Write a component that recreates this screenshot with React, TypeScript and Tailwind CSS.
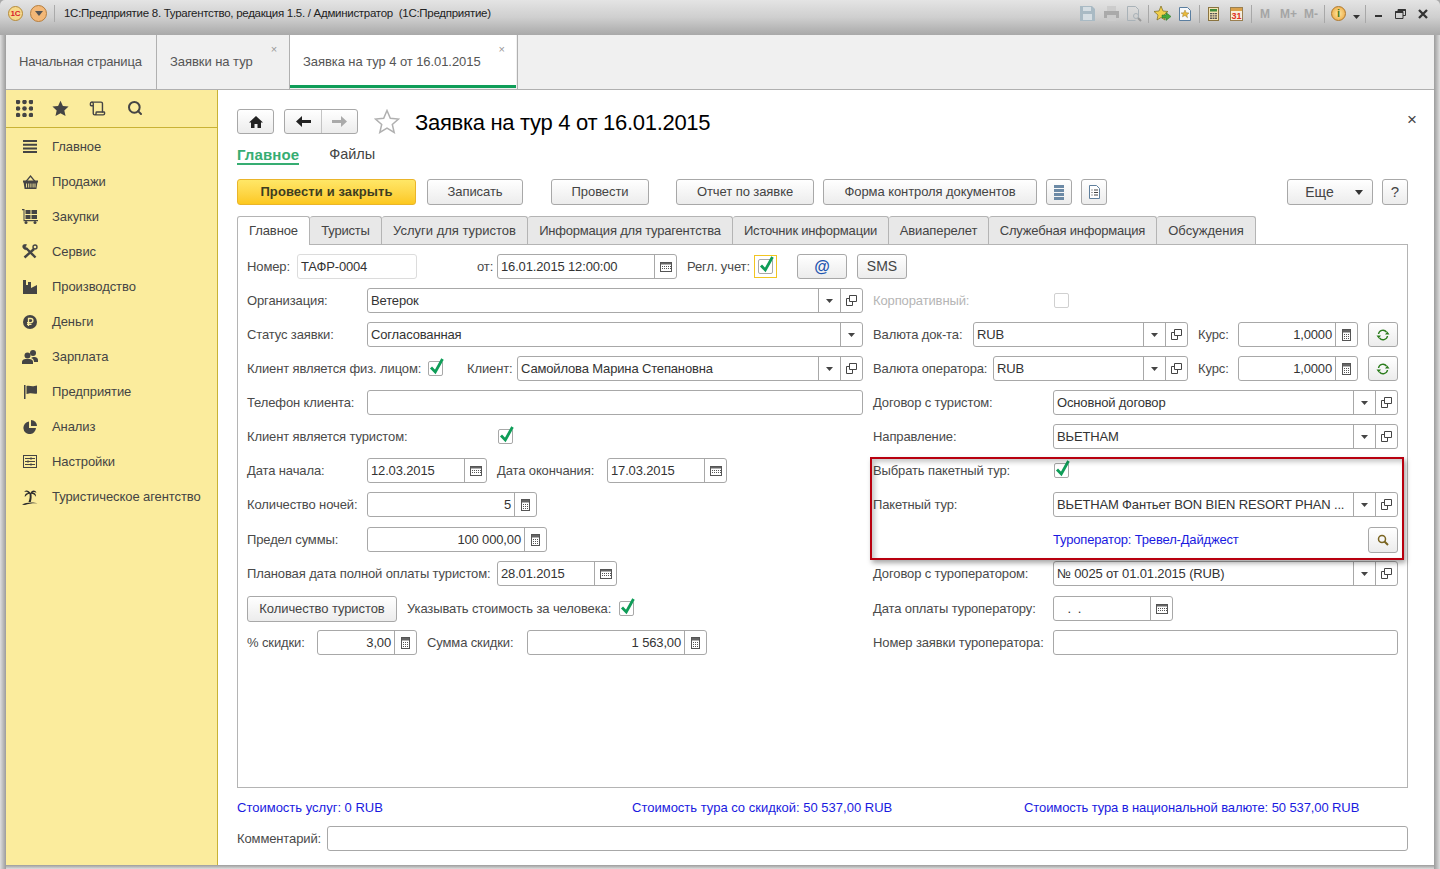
import type { ReactNode } from "react";
import { Search, Scroll } from "lucide-react";

const btn = "flex items-center justify-center rounded-[3px] border border-[#a8a8a8] bg-linear-to-b from-white to-[#ececec] shrink-0";
const btnText = "h-[26px] text-[#444] text-[13px] tracking-[-0.08px] whitespace-nowrap";

function Check() {
  return (
    <span className="relative block w-[15px] h-[15px] rounded-[2px] border border-[#a8a8a8] bg-white shrink-0">
      <svg width="18" height="18" viewBox="0 0 18 18" className="absolute left-[-1px] top-[-5px]">
        <path d="M3 10.500 L7.300 15 L14.500 2" fill="none" stroke="#0f9d58" strokeWidth="2.800" />
      </svg>
    </span>
  );
}

function DropIcon() {
  return <svg width="7" height="4" viewBox="0 0 7 4"><path d="M0 0H7L3.500 4Z" fill="#444" /></svg>;
}

function OpenIcon() {
  return (
    <svg width="11" height="11" viewBox="0 0 11 11" fill="none" stroke="#444">
      <path d="M3.500 .5h7v6h-7z" />
      <path d="M3.500 3.500h-3v7h6v-4" />
    </svg>
  );
}

function CalIcon() {
  return (
    <svg width="12" height="10" viewBox="0 0 12 10">
      <rect x=".5" y=".5" width="11" height="9" fill="#fff" stroke="#555" />
      <rect x="1" y="1" width="10" height="1.500" fill="#666" />
      <path d="M2 4h1v1H2zM4 4h1v1H4zM6 4h1v1H6zM8 4h1v1H8zM2 6h1v1H2zM4 6h1v1H4zM6 6h1v1H6zM8 6h1v1H8zM10 4h1v1h-1zM10 6h1v1h-1z" fill="#555" />
    </svg>
  );
}

function CalcIcon() {
  return (
    <svg width="9" height="12" viewBox="0 0 9 12">
      <rect x=".5" y=".5" width="8" height="11" fill="#fff" stroke="#555" />
      <rect x="1" y="1" width="7" height="2.500" fill="#666" />
      <path d="M2 5h1v1H2zM4 5h1v1H4zM6 5h1v1H6zM2 7h1v1H2zM4 7h1v1H4zM6 7h1v1H6zM2 9h1v1H2zM4 9h1v1H4zM6 9h1v1H6z" fill="#555" />
    </svg>
  );
}

function Refresh() {
  return (
    <svg width="14" height="12" viewBox="0 0 14 12" fill="none" stroke="#2d7d1e" strokeWidth="1.400">
      <path d="M2.500 5a4.500 4.500 0 0 1 8-2" />
      <path d="M11.500 7a4.500 4.500 0 0 1-8 2" />
      <path d="M13.500 5.500H9l2.300-3zM.5 6.500h4.500l-2.300 3z" fill="#2d7d1e" stroke="none" />
    </svg>
  );
}

const segment = "flex items-center justify-center h-full w-[22px] border-l border-[#a8a8a8] shrink-0";

interface FieldProps {
  className: string;
  value?: string;
  right?: boolean;
  light?: boolean;
  dd?: boolean;
  open?: boolean;
  cal?: boolean;
  calc?: boolean;
}

function Field({ className, value, right, light, dd, open, cal, calc }: FieldProps) {
  return (
    <div className={`flex items-center h-[25px] rounded-[3px] border bg-white shrink-0 ${light ? "border-[#dcdcdc]" : "border-[#a8a8a8]"} ${className}`}>
      <span className={`flex-1 min-w-0 px-[3px] text-[13px] tracking-[-0.15px] leading-[23px] text-[#333] whitespace-pre overflow-hidden ${right ? "text-right" : ""}`}>{value}</span>
      {dd && <span className={segment}><DropIcon /></span>}
      {open && <span className={segment}><OpenIcon /></span>}
      {cal && <span className={segment}><CalIcon /></span>}
      {calc && <span className={segment}><CalcIcon /></span>}
    </div>
  );
}

function Label({ className = "", muted, children }: { className?: string; muted?: boolean; children: ReactNode }) {
  return <span className={`shrink-0 whitespace-nowrap text-[13px] tracking-[-0.12px] ${muted ? "text-[#b5b5b5]" : "text-[#4a4a4a]"} ${className}`}>{children}</span>;
}

function Row({ wide, children }: { wide?: boolean; children: ReactNode }) {
  return <div className={`flex items-center h-[25px] ${wide ? "mb-[10px]" : "mb-[9px]"}`}>{children}</div>;
}

const menu: [string, ReactNode][] = [
  ["Главное", <svg width="14" height="13" viewBox="0 0 14 13" fill="#444"><path d="M0 0h14v2H0zM0 3.700h14v2H0zM0 7.400h14v2H0zM0 11h14v2H0z" /></svg>],
  ["Продажи", <svg width="15" height="14" viewBox="0 0 15 14"><path d="M3 6.500l4.500-5.500L12 6.500" fill="none" stroke="#444" strokeWidth="1.200" /><path d="M0 5.500h15v2h-.6l-1 6.500H1.600l-1-6.500H0z" fill="#444" /><path d="M3.500 8.500v4M5.700 8.500v4M7.900 8.500v4M10.100 8.500v4M12 8.500v4" stroke="#fbec9d" strokeWidth=".9" /></svg>],
  ["Закупки", <svg width="16" height="15" viewBox="0 0 16 15" fill="#444"><path d="M0 0h2.500v11H16v1.200H1.500V1.200H0z" /><path d="M3.500 1h5v4h-5zM9.500 1h5.500v4H9.500zM3.500 6h5v4h-5zM9.500 6h5.500v4H9.500z" /><circle cx="4" cy="13.500" r="1.500" /><circle cx="13" cy="13.500" r="1.500" /></svg>],
  ["Сервис", <svg width="16" height="15" viewBox="0 0 16 15" fill="none" stroke="#444"><path d="M4 4l9.500 9.500" strokeWidth="2.400" /><path d="M12 5L2.500 13.500" strokeWidth="2.400" /><path d="M.8 1.500a3.200 3.200 0 0 0 4.700 3.700L3.500 3l1-2.500A3 3 0 0 0 .8 1.500z" fill="#444" strokeWidth=".5" /><circle cx="13" cy="3" r="2" strokeWidth="1.400" /></svg>],
  ["Производство", <svg width="14" height="14" viewBox="0 0 14 14" fill="#444"><path d="M0 14V0h3v5h2V2h3v6l6-3v9z" /></svg>],
  ["Деньги", <svg width="14" height="14" viewBox="0 0 14 14"><circle cx="7" cy="7" r="7" fill="#444" /><path d="M5.500 11V3.500h2.300a2 2 0 0 1 0 4.200H4M4 9.300h4.500" fill="none" stroke="#fbec9d" strokeWidth="1.300" /></svg>],
  ["Зарплата", <svg width="16" height="14" viewBox="0 0 16 14" fill="#444"><circle cx="5.500" cy="5.500" r="3" /><path d="M0 14v-2c0-2.500 2.500-3 5.500-3s5.500.5 5.500 3v2z" /><circle cx="11" cy="3" r="3" /><path d="M11 7c2.500 0 5 .5 5 3v2h-4c0-2-1-3.500-3-4z" /></svg>],
  ["Предприятие", <svg width="13" height="14" viewBox="0 0 13 14" fill="#444"><path d="M0 0h1.500v14H0z" /><path d="M2.500 1c3-1 5 1 8 0l2.500-.5v8c-3 1-5-1-8 0l-2.500.5z" /></svg>],
  ["Анализ", <svg width="14" height="14" viewBox="0 0 14 14" fill="#444"><path d="M6 1.500A6.300 6.300 0 1 0 13 8H6z" /><path d="M8 0a6 6 0 0 1 6 6H8z" /></svg>],
  ["Настройки", <svg width="14" height="13" viewBox="0 0 14 13" fill="none" stroke="#444"><rect x=".5" y=".5" width="13" height="12" /><path d="M2 3.500h10M2 6.500h10M2 9.500h10" /><path d="M8 2.500v2M5 5.500v2M8 8.500v2" strokeWidth="1.500" /></svg>],
  ["Туристическое агентство", <svg width="16" height="16" viewBox="0 0 16 16" fill="#2c2c2c"><path d="M8.500 4C7 1 3.500.5 2 3c2-.7 3.200-.2 4.300 1C4 4 2.500 5.500 2.800 8c1.500-2 3-3 4.700-3.200.5 2.700.2 5.400-1 8.200h2.300c.9-3 1-5.500.6-8.200 1.800 0 3.500 1 4.400 3 .6-2.400-1-4.300-3.400-4.300 1.200-.8 2.800-.6 4 .5C13.500 1 10.300.6 8.500 4z" /><path d="M0 15.800c3-2.500 11-3 15.500-1.500-4.500-.2-9.500.4-12.500 1.700z" /></svg>],
];

function Sidebar() {
  return (
    <aside className="w-[212px] shrink-0 bg-[#fbec9d] border-r border-[#c9b235]">
      <div className="flex items-center h-[38px] pl-[10px] border-b border-[#c9b235]">
        <svg width="17" height="17" viewBox="0 0 17 17" fill="#444">
          {[2, 8.5, 15].flatMap((y) => [2, 8.5, 15].map((x) => <circle key={`${x}-${y}`} cx={x} cy={y} r="2.300" />))}
        </svg>
        <svg width="17" height="17" viewBox="0 0 24 24" fill="#444" className="ml-[19px]"><path d="M12 1l3.400 7.400 8 .9-6 5.400 1.700 7.900-7.100-4-7.100 4 1.700-7.900-6-5.400 8-.9z" /></svg>
        <Scroll size={17} color="#444" strokeWidth={2} className="ml-[20px]" />
        <Search size={16} color="#444" strokeWidth={3} className="ml-[21px] mt-[-2px]" />
      </div>
      {menu.map(([name, icon]) => (
        <div key={name} className="flex items-center h-[35px] pt-[2px]">
          <span className="flex items-center justify-center w-[16px] ml-[16px] mr-[14px]">{icon}</span>
          <span className="text-[13px] tracking-[-0.08px] text-[#444] whitespace-nowrap">{name}</span>
        </div>
      ))}
    </aside>
  );
}

function TitleBar() {
  return (
    <div className="relative flex items-center h-[35px] shrink-0 pl-[8px] bg-linear-to-b from-[#e4e4e4] via-[#cfcfcf] to-[#a9a9a9] rounded-t-[5px]">
      <span className="flex items-center justify-center w-[15px] h-[15px] rounded-full bg-[#f6d98a] border border-[#b58a3a] text-[8px] font-bold text-[#d8232a] mt-[-8px]">1С</span>
      <span className="flex items-center justify-center w-[17px] h-[17px] rounded-full bg-[#f3b878] border border-[#b57e3f] ml-[7px] mt-[-8px]">
        <svg width="8" height="5" viewBox="0 0 8 5"><path d="M0 0h8L4 5z" fill="#555" /></svg>
      </span>
      <span className="w-px h-[17px] bg-[#aaa] ml-[7px] mt-[-8px]" />
      <span className="ml-[9px] mt-[-8px] text-[11.500px] tracking-[-0.28px] text-[#222] whitespace-pre">1С:Предприятие 8. Турагентство, редакция 1.5. / Администратор  (1С:Предприятие)</span>
      <div className="flex items-center ml-auto mr-[12px] mt-[-8px]">
        <svg width="15" height="15" viewBox="0 0 15 15" fill="#a9bac4"><path d="M0 0h12l3 3v12H0z" /><path d="M3 1h8v4H3zM3 8h9v6H3z" fill="#d6dee3" /></svg>
        <svg width="15" height="15" viewBox="0 0 15 15" className="ml-[9px]" fill="#aaa"><path d="M3 0h9v5H3z" fill="#ccc" /><path d="M0 5h15v7H0z" /><path d="M3 9h9v6H3z" fill="#ccc" /></svg>
        <svg width="16" height="16" viewBox="0 0 16 16" className="ml-[7px]" fill="none" stroke="#a9b2b8"><path d="M1.500.5h8l3 3v8m-3 3h-8V.5" /><circle cx="10" cy="10" r="2.500" /><path d="M12 12l3 3" strokeWidth="2" stroke="#999" /></svg>
        <span className="w-px h-[18px] bg-[#a8a8a8] ml-[6px]" />
        <svg width="17" height="16" viewBox="0 0 17 16" className="ml-[5px]"><path d="M7 0l2 5 5 .5-4 3.500 1 5-4-2.500-4 2.500 1-5-4-3.500 5-.5z" fill="#f2cf4a" stroke="#7a6a20" strokeWidth=".7" /><path d="M8 9h4V6.500l5 4-5 4V12H8z" fill="#46a83a" stroke="#2b6f24" strokeWidth=".5" /></svg>
        <svg width="12" height="14" viewBox="0 0 12 14" className="ml-[8px]"><path d="M.5.500h8l3 3v10H.500z" fill="#f7f8fa" stroke="#5a7ea0" /><path d="M6 3l1.200 2.700 2.800.3-2.100 1.900.6 2.900L6 8.400l-2.500 1.400.6-2.900L2 6l2.800-.3z" fill="#e9b93a" stroke="#8a6a20" strokeWidth=".4" /></svg>
        <span className="w-px h-[18px] bg-[#a8a8a8] ml-[8px]" />
        <svg width="11" height="14" viewBox="0 0 11 14" className="ml-[8px]"><rect x=".5" y=".5" width="10" height="13" fill="#f4e3b0" stroke="#8a7440" /><rect x="2" y="2" width="7" height="2.500" fill="#3f8a3a" /><path d="M2 6h2v1.300H2zM4.500 6h2v1.300h-2zM7 6h2v1.300H7zM2 8.300h2v1.300H2zM4.500 8.300h2v1.300h-2zM7 8.300h2v1.300H7zM2 10.600h2v1.300H2zM4.500 10.600h2v1.300h-2zM7 10.600h2v1.300H7z" fill="#555" /></svg>
        <span className="block w-[13px] h-[14px] ml-[11px] bg-[#f7efdc] border border-[#9a7f50]">
          <span className="block h-[3px] bg-[#d9a04a]" />
          <span className="block text-center text-[9px] leading-[10px] font-bold text-[#e03020]">31</span>
        </span>
        <span className="w-px h-[18px] bg-[#a8a8a8] ml-[8px]" />
        <span className="ml-[8px] text-[12px] font-bold text-[#a5a5a5]">M</span>
        <span className="ml-[10px] text-[12px] font-bold text-[#a5a5a5]">M+</span>
        <span className="ml-[7px] text-[12px] font-bold text-[#a5a5a5]">M-</span>
        <span className="w-px h-[18px] bg-[#a8a8a8] ml-[6px]" />
        <span className="flex items-center justify-center w-[15px] h-[15px] ml-[6px] rounded-full bg-radial from-[#ffe9a0] to-[#e8a030] border border-[#b0782a] text-[11px] font-bold text-[#4a7a20]">i</span>
        <svg width="7" height="4" viewBox="0 0 7 4" className="ml-[7px] mt-[6px]"><path d="M0 0h7L3.500 4z" fill="#333" /></svg>
        <span className="w-px h-[18px] bg-[#a8a8a8] ml-[5px]" />
        <span className="w-[7px] h-[2px] bg-[#333] ml-[9px] mt-[5px]" />
        <svg width="11" height="10" viewBox="0 0 11 10" fill="none" stroke="#333" className="ml-[13px]"><path d="M3 2.500V.5h7.500v6H8" /><path d="M.5 2.500h7.500v7H.5z" /><path d="M.5 3h7.500M3 1h7.500" strokeWidth="2" /></svg>
        <svg width="10" height="10" viewBox="0 0 10 10" stroke="#333" strokeWidth="2.300" className="ml-[12px]"><path d="M1 1l8 8M9 1l-8 8" /></svg>
      </div>
    </div>
  );
}

function WindowTabs() {
  return (
    <div className="flex h-[55px] shrink-0 bg-[#f0f0f0] border-b border-[#b0b0b0]">
      <div className="flex items-center w-[151px] pl-[13px] border-r border-[#b0b0b0] text-[13px] tracking-[-0.17px] text-[#555] whitespace-nowrap">Начальная страница</div>
      <div className="relative flex items-center w-[133px] pl-[13px] border-r border-[#b0b0b0] text-[13px] tracking-[-0.05px] text-[#555] whitespace-nowrap">
        Заявки на тур
        <span className="absolute right-[12px] top-[8px] text-[11px] leading-[12px] text-[#999]">×</span>
      </div>
      <div className="relative w-[228px] border-r border-[#b0b0b0]">
        <div className="flex items-center h-[53px] pl-[13px] mb-px mr-px bg-white border-b-[3px] border-[#0f9d58] pt-[3px] text-[13px] tracking-[-0.07px] text-[#555] whitespace-nowrap">
          Заявка на тур 4 от 16.01.2015
        </div>
        <span className="absolute right-[12px] top-[8px] text-[11px] leading-[12px] text-[#999]">×</span>
      </div>
    </div>
  );
}

const formTabs = [
  ["Туристы", "w-[72px] tracking-[-0.2px]"],
  ["Услуги для туристов", "w-[146px] tracking-[0px]"],
  ["Информация для турагентства", "w-[205px] tracking-[-0.2px]"],
  ["Источник информации", "w-[156px] tracking-[-0.2px]"],
  ["Авиаперелет", "w-[100px] tracking-[-0.1px]"],
  ["Служебная информация", "w-[168px] tracking-[-0.2px]"],
  ["Обсуждения", "w-[99px] tracking-[0px]"],
];

function RateButton() {
  return <span className={`${btn} w-[30px] h-[25px] ml-[10px]`}><Refresh /></span>;
}

function LeftColumn() {
  return (
    <div className="w-[616px] shrink-0">
      <Row><Label className="w-[120px]">Организация:</Label><Field className="w-[496px]" value="Ветерок" dd open /></Row>
      <Row><Label className="w-[120px]">Статус заявки:</Label><Field className="w-[496px]" value="Согласованная" dd /></Row>
      <Row>
        <Label className="w-[181px]">Клиент является физ. лицом:</Label>
        <Check />
        <Label className="ml-[24px] w-[50px]">Клиент:</Label>
        <Field className="w-[346px]" value="Самойлова Марина Степановна" dd open />
      </Row>
      <Row><Label className="w-[120px]">Телефон клиента:</Label><Field className="w-[496px]" /></Row>
      <Row><Label className="w-[251px]">Клиент является туристом:</Label><Check /></Row>
      <Row>
        <Label className="w-[120px]">Дата начала:</Label>
        <Field className="w-[120px]" value="12.03.2015" cal />
        <Label className="ml-[10px] w-[110px]">Дата окончания:</Label>
        <Field className="w-[120px]" value="17.03.2015" cal />
      </Row>
      <Row wide><Label className="w-[120px]">Количество ночей:</Label><Field className="w-[170px]" value="5" right calc /></Row>
      <Row><Label className="w-[120px]">Предел суммы:</Label><Field className="w-[180px]" value="100 000,00" right calc /></Row>
      <Row wide><Label className="w-[250px]">Плановая дата полной оплаты туристом:</Label><Field className="w-[120px]" value="28.01.2015" cal /></Row>
      <Row>
        <span className={`${btn} ${btnText} w-[150px]`}>Количество туристов</span>
        <Label className="ml-[10px] w-[212px]">Указывать стоимость за человека:</Label>
        <Check />
      </Row>
      <Row>
        <Label className="w-[70px]">% скидки:</Label>
        <Field className="w-[100px]" value="3,00" right calc />
        <Label className="ml-[10px] w-[100px]">Сумма скидки:</Label>
        <Field className="w-[180px]" value="1 563,00" right calc />
      </Row>
    </div>
  );
}

function RightColumn() {
  return (
    <div className="w-[525px] ml-[10px] shrink-0">
      <Row>
        <Label className="w-[181px]" muted>Корпоративный:</Label>
        <span className="block w-[15px] h-[15px] rounded-[2px] border border-[#d0d0d0] bg-white" />
      </Row>
      <Row>
        <Label className="w-[100px]">Валюта док-та:</Label>
        <Field className="w-[215px]" value="RUB" dd open />
        <Label className="ml-[10px] w-[40px]">Курс:</Label>
        <Field className="w-[120px]" value="1,0000" right calc />
        <RateButton />
      </Row>
      <Row>
        <Label className="w-[120px]">Валюта оператора:</Label>
        <Field className="w-[195px]" value="RUB" dd open />
        <Label className="ml-[10px] w-[40px]">Курс:</Label>
        <Field className="w-[120px]" value="1,0000" right calc />
        <RateButton />
      </Row>
      <Row><Label className="w-[180px]">Договор с туристом:</Label><Field className="w-[345px]" value="Основной договор" dd open /></Row>
      <Row><Label className="w-[180px]">Направление:</Label><Field className="w-[345px]" value="ВЬЕТНАМ" dd open /></Row>
      <Row><Label className="w-[181px]">Выбрать пакетный тур:</Label><Check /></Row>
      <Row wide><Label className="w-[180px]">Пакетный тур:</Label><Field className="w-[345px]" value="ВЬЕТНАМ Фантьет BON BIEN RESORT PHAN ..." dd open /></Row>
      <Row>
        <span className="w-[180px]" />
        <span className="w-[315px] text-[13px] tracking-[-0.17px] text-[#1a1ae0] whitespace-nowrap">Туроператор: Тревел-Дайджест</span>
        <span className={`${btn} w-[30px] h-[26px]`}>
          <svg width="12" height="12" viewBox="0 0 12 12" fill="none" stroke="#7a6420" strokeWidth="1.500"><circle cx="5" cy="5" r="3.500" /><path d="M7.500 7.500L11 11" strokeWidth="2" /></svg>
        </span>
      </Row>
      <Row wide><Label className="w-[180px]">Договор с туроператором:</Label><Field className="w-[345px]" value="№ 0025 от 01.01.2015 (RUB)" dd open /></Row>
      <Row><Label className="w-[180px]">Дата оплаты туроператору:</Label><Field className="w-[120px]" value="   .  ." cal /></Row>
      <Row><Label className="w-[180px]">Номер заявки туроператора:</Label><Field className="w-[345px]" /></Row>
    </div>
  );
}

function Main() {
  return (
    <main className="relative flex-1 min-w-0 bg-white pl-[19px] pr-[26px] pt-[19px]">
      <div className="relative flex items-center h-[25px]">
        <span className={`${btn} w-[37px] h-[25px]`}>
          <svg width="14" height="12" viewBox="0 0 14 12" fill="#222"><path d="M7 0L14 6.500h-2V12H8.500V8h-3v4H2V6.500H0z" /></svg>
        </span>
        <div className="flex ml-[10px] w-[74px] h-[25px] rounded-[3px] border border-[#a8a8a8] bg-linear-to-b from-white to-[#ececec]">
          <span className="flex items-center justify-center w-[37px] border-r border-[#c4c4c4]">
            <svg width="15" height="11" viewBox="0 0 15 11" fill="#222"><path d="M6 0v4h9v3H6v4L0 5.500z" /></svg>
          </span>
          <span className="flex items-center justify-center flex-1">
            <svg width="15" height="11" viewBox="0 0 15 11" fill="#aaa"><path d="M9 0v4H0v3h9v4l6-5.500z" /></svg>
          </span>
        </div>
        <svg width="26" height="25" viewBox="0 0 26 25" className="ml-[16px]" fill="none" stroke="#b0b0b0" strokeWidth="1.500"><path d="M13 1.500l3.300 7.700 8.200.8-6.200 5.400 1.900 8.100-7.200-4.300-7.200 4.300 1.900-8.100L1.500 10l8.200-.8z" /></svg>
        <h1 className="ml-[15px] pt-[2px] text-[22px] tracking-[-0.3px] leading-[25px] text-black whitespace-nowrap">Заявка на тур 4 от 16.01.2015</h1>
        <span className="absolute right-[-9px] top-[1px] text-[17px] leading-[20px] text-[#444]">×</span>
      </div>
      <div className="flex items-center h-[20px] mt-[11px]">
        <span className="text-[15px] tracking-[0.1px] font-bold text-[#36ad72] border-b-2 border-[#36ad72] leading-[17px]">Главное</span>
        <span className="ml-[30px] text-[14.500px] text-[#444]">Файлы</span>
      </div>
      <div className="flex mt-[14px]">
        <span className="flex items-center justify-center w-[179px] h-[26px] rounded-[3px] border border-[#eab52a] bg-linear-to-b from-[#ffe766] to-[#fcc81c] text-[13px] tracking-[0.1px] font-bold text-[#3d3d20]">Провести и закрыть</span>
        <span className={`${btn} ${btnText} w-[96px] ml-[11px]`}>Записать</span>
        <span className={`${btn} ${btnText} w-[98px] ml-[28px]`}>Провести</span>
        <span className={`${btn} ${btnText} w-[138px] ml-[27px]`}>Отчет по заявке</span>
        <span className={`${btn} ${btnText} w-[214px] ml-[9px]`}>Форма контроля документов</span>
        <span className={`${btn} h-[26px] w-[26px] ml-[9px]`}>
          <svg width="10" height="15" viewBox="0 0 10 15" fill="#6c8aa6"><path d="M0 0h10v3H0zM0 4h10v3H0zM0 8h10v3H0zM0 12h10v3H0z" /></svg>
        </span>
        <span className={`${btn} h-[26px] w-[26px] ml-[9px]`}>
          <svg width="11" height="14" viewBox="0 0 11 14" fill="none" stroke="#5f7f9c"><path d="M.5.500h7l3 3v10H.500z" fill="#fff" /><path d="M2.500 5h1M5 5h4M2.500 7.500h1M5 7.500h4M2.500 10h1M5 10h4" stroke="#444" /></svg>
        </span>
        <span className={`${btn} h-[26px] w-[86px] ml-auto gap-[21px] pl-[8px] text-[14px] text-[#444]`}>Еще <svg width="8" height="5" viewBox="0 0 8 5"><path d="M0 0h8L4 5z" fill="#333" /></svg></span>
        <span className={`${btn} h-[26px] w-[26px] ml-[9px] text-[15px] text-[#444]`}>?</span>
      </div>
      <div className="flex h-[28px] mt-[11px]">
        <span className="relative z-10 flex items-center justify-center w-[73px] h-[29px] rounded-t-[3px] border border-b-0 border-[#b4b4b4] bg-white text-[13px] tracking-[-0.1px] text-[#444]">Главное</span>
        {formTabs.map(([name, w]) => (
          <span key={name} className={`flex items-center justify-center ${w} h-[28px] rounded-t-[3px] border border-l-0 border-b-0 border-[#b4b4b4] bg-[#e8e8e8] text-[13px] text-[#444] whitespace-nowrap`}>{name}</span>
        ))}
      </div>
      <section className="h-[544px] border border-[#b4b4b4] pl-[9px] pt-[9px]">
        <Row>
          <Label className="w-[50px]">Номер:</Label>
          <Field className="w-[120px]" value="ТАФР-0004" light />
          <Label className="ml-[60px] w-[20px]">от:</Label>
          <Field className="w-[180px]" value="16.01.2015 12:00:00" cal />
          <Label className="ml-[10px] w-[67px]">Регл. учет:</Label>
          <span className="flex items-center justify-center w-[23px] h-[23px] border border-[#f2c521]"><Check /></span>
          <span className={`${btn} w-[50px] h-[25px] ml-[20px] text-[16px] font-bold text-[#1f56b0]`}>@</span>
          <span className={`${btn} w-[50px] h-[25px] ml-[10px] text-[14px] text-[#444]`}>SMS</span>
        </Row>
        <div className="flex">
          <LeftColumn />
          <RightColumn />
        </div>
      </section>
      <div className="flex items-center h-[18px] mt-[11px] text-[13px] text-[#1a1ae0] whitespace-nowrap">
        <span className="w-[395px]">Стоимость услуг: 0 RUB</span>
        <span className="w-[392px]">Стоимость тура со скидкой: 50 537,00 RUB</span>
        <span className="tracking-[-0.1px]">Стоимость тура в национальной валюте: 50 537,00 RUB</span>
      </div>
      <div className="flex items-center h-[25px] mt-[9px]">
        <Label className="w-[90px]">Комментарий:</Label>
        <Field className="flex-1" />
      </div>
      {/* red highlight drawn over the form */}
      <div className="absolute left-[652px] top-[367px] w-[534px] h-[103px] border-2 border-[#b8000f] shadow-[2px_3px_5px_rgba(0,0,0,0.35),inset_3px_3px_5px_rgba(0,0,0,0.22)] pointer-events-none" />
    </main>
  );
}

export default function App() {
  return (
    <div className="flex flex-col w-[1440px] h-[869px] overflow-hidden bg-[#a8a8a8] font-['Liberation_Sans',sans-serif]">
      <TitleBar />
      <div className="flex flex-1 min-h-0">
        <div className="w-[6px] shrink-0 bg-linear-to-r from-[#dedede] to-[#9c9c9c]" />
        <div className="flex flex-col flex-1 min-w-0">
          <WindowTabs />
          <div className="flex flex-1 min-h-0">
            <Sidebar />
            <Main />
          </div>
          <div className="h-[4px] shrink-0 bg-linear-to-b from-[#9c9c9c] to-[#dedede]" />
        </div>
        <div className="w-[6px] shrink-0 bg-linear-to-l from-[#dedede] to-[#9c9c9c]" />
      </div>
    </div>
  );
}
